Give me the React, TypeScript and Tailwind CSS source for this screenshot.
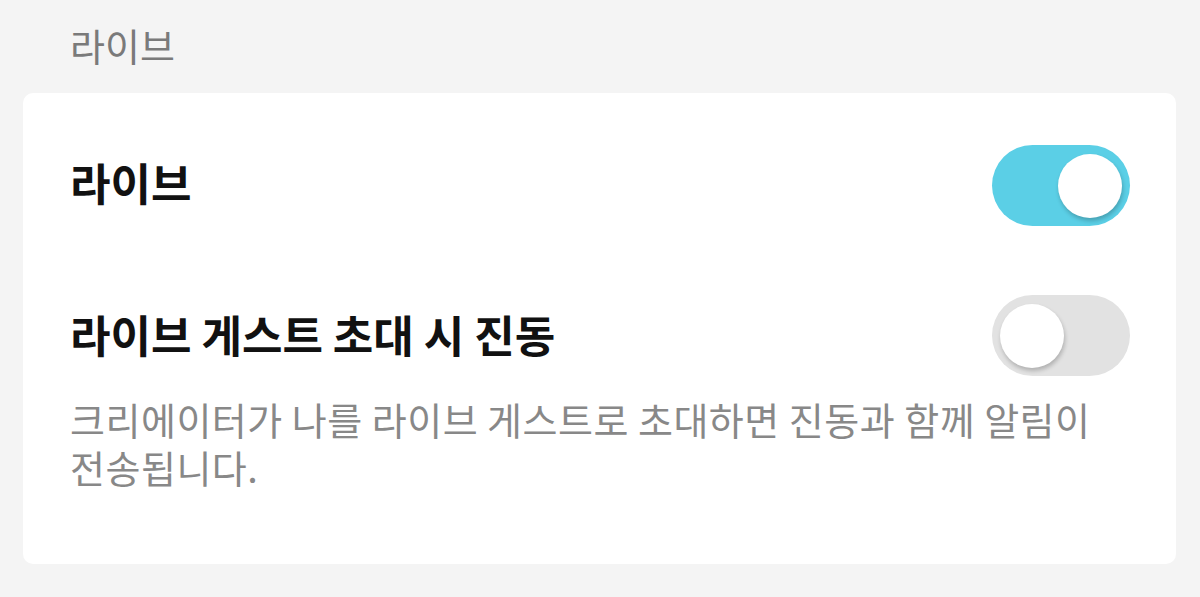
import { useState } from "react";

interface ToggleProps {
  on: boolean;
  onChange: (v: boolean) => void;
}

function Toggle({ on, onChange }: ToggleProps) {
  return (
    <button
      onClick={() => onChange(!on)}
      className={`relative shrink-0 w-[138px] h-[81px] rounded-full transition-colors ${
        on ? "bg-[#5bcfe6]" : "bg-[#e2e2e2]"
      }`}
    >
      <span
        className={`absolute top-[8.5px] w-[64px] h-[64px] rounded-full bg-white shadow-[1px_3px_4px_rgba(0,0,0,0.22)] transition-all ${
          on ? "left-[66px]" : "left-[8px]"
        }`}
      />
    </button>
  );
}

export default function App() {
  const [live, setLive] = useState(true);
  const [vibrate, setVibrate] = useState(false);

  return (
    <div
      className="min-h-[597px] bg-[#f4f4f4] px-[23px] pt-[21px]"
      style={{ fontFamily: '"Noto Sans CJK KR", "Noto Sans", sans-serif' }}
    >
      <h2 className="pl-[47px] text-[38px] leading-[48px] text-[#7a7a7a]">라이브</h2>

      <div className="mt-[24px] w-[1153px] rounded-[10px] bg-white pl-[47px] pr-[46px] pt-[52px] pb-[73px]">
        {/* 라이브 on/off */}
        <div className="flex items-center justify-between">
          <span className="-mt-[8px] text-[44px] font-bold leading-[48px] text-[#111]">라이브</span>
          <Toggle on={live} onChange={setLive} />
        </div>

        {/* 게스트 초대 진동 */}
        <div className="mt-[69px] flex items-center justify-between">
          <span className="-mt-[4px] text-[44px] font-bold leading-[48px] text-[#111]">
            라이브 게스트 초대 시 진동
          </span>
          <Toggle on={vibrate} onChange={setVibrate} />
        </div>
        <p className="mt-[19px] break-keep text-[38px] leading-[48px] tracking-[0.5px] text-[#888888]">
          크리에이터가 나를 라이브 게스트로 초대하면 진동과 함께 알림이 전송됩니다.
        </p>
      </div>
    </div>
  );
}
